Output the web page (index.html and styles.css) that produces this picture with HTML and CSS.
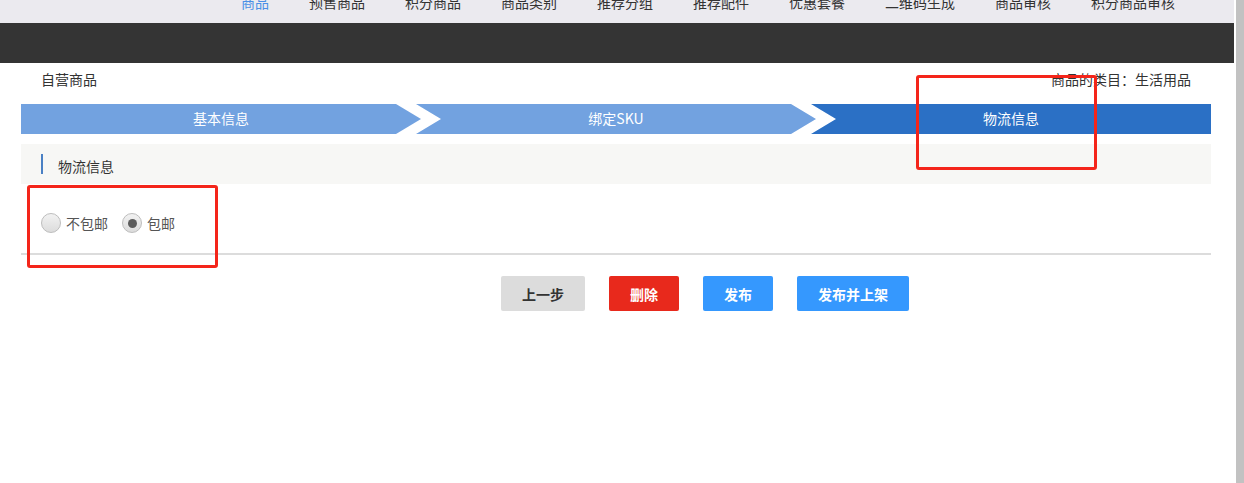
FILE: index.html
```html
<!DOCTYPE html>
<html lang="zh-CN">
<head>
<meta charset="utf-8">
<title>物流信息</title>
<link rel="stylesheet" href="styles.css">
</head>
<body>
<div class="page">
  <div class="topnav">
    <ul class="nav-list">
      <li class="nav-item active">商品</li>
      <li class="nav-item">预售商品</li>
      <li class="nav-item">积分商品</li>
      <li class="nav-item">商品类别</li>
      <li class="nav-item">推荐分组</li>
      <li class="nav-item">推荐配件</li>
      <li class="nav-item">优惠套餐</li>
      <li class="nav-item">二维码生成</li>
      <li class="nav-item">商品审核</li>
      <li class="nav-item">积分商品审核</li>
    </ul>
  </div>
  <div class="darkbar"></div>
  <div class="content">
    <div class="title-row">
      <span class="title">自营商品</span>
      <span class="category">商品的类目：生活用品</span>
    </div>
    <div class="steps">
      <div class="step step-first">基本信息</div>
      <div class="step step-mid">绑定SKU</div>
      <div class="step step-last active">物流信息</div>
    </div>
    <div class="section-head">
      <span class="section-bar"></span>
      <span class="section-title">物流信息</span>
    </div>
    <div class="radio-row">
      <label class="radio"><span class="radio-dot"></span><span class="radio-text">不包邮</span></label>
      <label class="radio checked"><span class="radio-dot"></span><span class="radio-text">包邮</span></label>
    </div>
    <div class="divider"></div>
    <div class="actions">
      <button class="btn btn-gray">上一步</button>
      <button class="btn btn-red">删除</button>
      <button class="btn btn-blue">发布</button>
      <button class="btn btn-blue btn-wide">发布并上架</button>
    </div>
  </div>
  <div class="annot annot-steps"></div>
  <div class="annot annot-radio"></div>
</div>
<div class="scrollbar"></div>
</body>
</html>
```
FILE: styles.css
```css
* { box-sizing: border-box; }
html, body {
  margin: 0;
  padding: 0;
  background: #fff;
}
body {
  font-family: "Noto Sans CJK SC", "Noto Sans", "Liberation Sans", sans-serif;
  font-size: 14px;
  color: #333;
}
.page {
  position: relative;
  width: 1234px;
  height: 483px;
}
.topnav {
  height: 23px;
  background: #ebeaef;
  overflow: hidden;
}
.nav-list {
  list-style: none;
  margin: 0;
  padding: 0 0 0 241px;
  display: flex;
  gap: 40px;
}
.nav-item {
  line-height: 14px;
  margin-top: -5px;
  color: #333;
  white-space: nowrap;
}
.nav-item.active { color: #4a8fe6; }
.darkbar {
  height: 40px;
  background: #343434;
}
.content {
  margin-left: 21px;
  width: 1190px;
}
.title-row {
  display: flex;
  justify-content: space-between;
  padding: 6px 20px 0 20px;
  line-height: 20px;
  margin-bottom: 15px;
  color: #333;
}
.steps {
  display: flex;
  height: 30px;
}
.step {
  flex: 1;
  height: 30px;
  line-height: 28px;
  text-align: center;
  color: #fff;
  background: #72a2e0;
  margin-left: -5px;
}
.step-first {
  margin-left: 0;
  clip-path: polygon(0 0, calc(100% - 25px) 0, 100% 50%, calc(100% - 25px) 100%, 0 100%);
}
.step-mid {
  clip-path: polygon(0 0, calc(100% - 25px) 0, 100% 50%, calc(100% - 25px) 100%, 0 100%, 25px 50%);
}
.step-last {
  clip-path: polygon(0 0, 100% 0, 100% 100%, 0 100%, 25px 50%);
}
.step.active { background: #2b70c5; }
.section-head {
  margin-top: 10px;
  height: 40px;
  background: #f7f7f5;
  display: flex;
  align-items: center;
  padding-left: 20px;
}
.section-bar {
  width: 2px;
  height: 20px;
  background: #4a80c4;
  margin-right: 15px;
}
.section-title {
  color: #333;
  padding-top: 4px;
}
.radio-row {
  display: flex;
  align-items: center;
  height: 69px;
  padding: 29px 0 20px 20px;
  gap: 14px;
}
.radio {
  display: flex;
  align-items: center;
  gap: 5px;
  color: #555;
}
.radio-dot {
  width: 20px;
  height: 20px;
  border-radius: 50%;
  border: 1px solid #bdbdbd;
  background: linear-gradient(#f2f2f2, #dcdcdc);
  display: flex;
  align-items: center;
  justify-content: center;
}
.radio.checked .radio-dot::after {
  content: "";
  width: 9px;
  height: 9px;
  border-radius: 50%;
  background: #5c5c5c;
}
.divider {
  height: 2px;
  background: #dcdcdc;
}
.actions {
  display: flex;
  gap: 24px;
  margin-top: 21px;
  padding-left: 480px;
}
.btn {
  height: 35px;
  border: none;
  border-radius: 2px;
  font-family: inherit;
  font-size: 14px;
  font-weight: bold;
  color: #fff;
  width: 70px;
  padding: 0;
}
.btn-gray { width: 84px; background: #dcdcdc; color: #333; }
.btn-red { background: #e8291c; }
.btn-blue { background: #3598fe; }
.btn-wide { width: 112px; }
.annot {
  position: absolute;
  border: 3px solid #f4251a;
  border-radius: 3px;
}
.annot-steps {
  left: 916px;
  top: 75px;
  width: 181px;
  height: 95px;
}
.annot-radio {
  left: 27px;
  top: 185px;
  width: 191px;
  height: 83px;
}
.scrollbar {
  position: fixed;
  top: 0;
  right: 0;
  width: 8px;
  height: 100%;
  background: #c2c2c2;
}
```
